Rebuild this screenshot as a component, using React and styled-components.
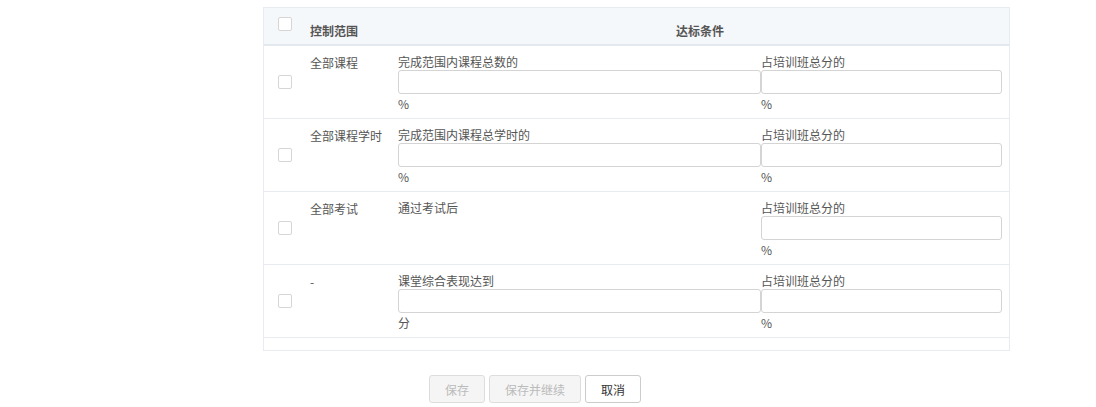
import React from 'react'
import styled, { createGlobalStyle } from 'styled-components';

const GlobalStyle = createGlobalStyle`
    body {
        margin: 0;
        background: #ffffff;
        font-family: "Noto Sans CJK SC", "Liberation Sans", sans-serif;
        font-size: 12px;
        color: #555555;
    }
`;

const rows = [
    { scope: '全部课程', left: { label: '完成范围内课程总数的', unit: '%' } },
    { scope: '全部课程学时', left: { label: '完成范围内课程总学时的', unit: '%' } },
    { scope: '全部考试', left: { label: '通过考试后' } },
    { scope: '-', left: { label: '课堂综合表现达到', unit: '分' } },
];

const Field = ({ label, unit }) => (
    <FieldBox>
        <Label>{label}</Label>
        {unit && <Input />}
        {unit && <Unit>{unit}</Unit>}
    </FieldBox>
)

const App = () => {
    return (
        <Page>
            <GlobalStyle />
            <Table>
                <HeadRow>
                    <CheckCell $head><Check /></CheckCell>
                    <ScopeCell $head>控制范围</ScopeCell>
                    <HeadTitle>达标条件</HeadTitle>
                </HeadRow>
                {rows.map((r) => (
                    <Row key={r.scope + r.left.label}>
                        <CheckCell><Check /></CheckCell>
                        <ScopeCell>{r.scope}</ScopeCell>
                        <Conditions>
                            <Field {...r.left} />
                            <Field label="占培训班总分的" unit="%" />
                        </Conditions>
                    </Row>
                ))}
                <Footer />
            </Table>
            <Actions>
                <Button disabled>保存</Button>
                <Button disabled>保存并继续</Button>
                <Button>取消</Button>
            </Actions>
        </Page>
    )
}

const Page = styled.div`
    padding: 7px 0 0 263px;
    width: 747px;
`;
const Table = styled.div`
    border: 1px solid #e8ecf0;
`;
const HeadRow = styled.div`
    display: grid;
    grid-template-columns: 46px 88px 1fr;
    height: 36px;
    background: #f5f8fb;
    border-bottom: 2px solid #e3e8ee;
    font-weight: bold;
    color: #555555;
`;
const Row = styled.div`
    display: grid;
    grid-template-columns: 46px 88px 1fr;
    height: 72px;
    border-bottom: 1px solid #e8ecf0;
`;
const CheckCell = styled.div`
    display: flex;
    justify-content: center;
    align-items: ${p => p.$head ? 'flex-start' : 'center'};
    padding-top: ${p => p.$head ? '9px' : '0'};
    padding-right: 4px;
`;
const Check = styled.span`
    width: 12px;
    height: 12px;
    border: 1px solid #d6d6d6;
    border-radius: 2px;
    background: #ffffff;
`;
const ScopeCell = styled.div`
    padding-top: ${p => p.$head ? '14px' : '8px'};
    line-height: 17px;
`;
const HeadTitle = styled.div`
    padding: 14px 7px 0 0;
    line-height: 17px;
    text-align: center;
`;
const Conditions = styled.div`
    display: grid;
    grid-template-columns: 363px 241px;
    padding-top: 7px;
`;
const FieldBox = styled.div`
    display: flex;
    flex-direction: column;
    align-items: flex-start;
`;
const Label = styled.div`
    line-height: 17px;
    height: 17px;
`;
const Input = styled.input`
    box-sizing: border-box;
    width: 100%;
    height: 24px;
    border: 1px solid #d4d4d4;
    border-radius: 3px;
    background: #ffffff;
    outline: none;
    margin: 0;
`;
const Unit = styled.div`
    line-height: 17px;
    padding-top: 1px;
`;
const Footer = styled.div`
    height: 12px;
`;
const Actions = styled.div`
    display: flex;
    gap: 4px;
    padding: 24px 0 0 166px;
`;
const Button = styled.button`
    height: 28px;
    padding: 0 15px;
    font-family: "Noto Sans CJK SC", "Liberation Sans", sans-serif;
    font-size: 12px;
    border-radius: 3px;
    border: 1px solid ${p => p.disabled ? '#dddddd' : '#cccccc'};
    background: ${p => p.disabled ? '#f5f5f5' : '#ffffff'};
    color: ${p => p.disabled ? '#bbbbbb' : '#333333'};
`;

export default App
